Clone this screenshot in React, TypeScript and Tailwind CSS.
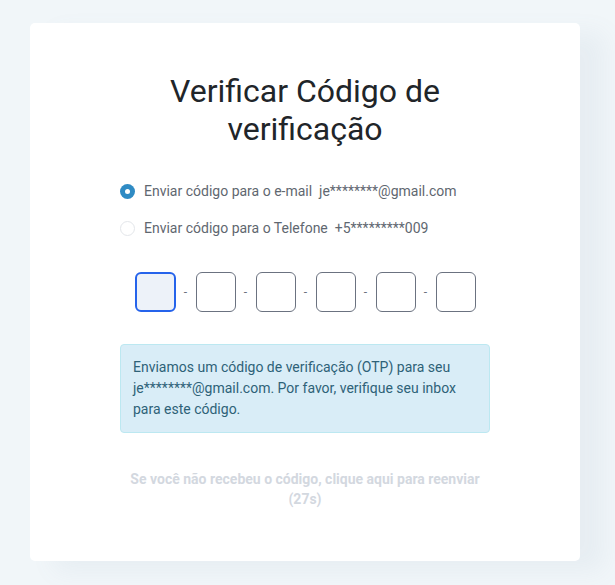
import { useState } from "react";

const DIGITS = [0, 1, 2, 3, 4, 5];

export default function App() {
  const [channel, setChannel] = useState<"email" | "phone">("email");

  return (
    <div className="min-h-[585px] w-[615px] bg-[#f1f6f9] pt-[23px] pl-[30px] font-['Roboto',sans-serif]">
      <div className="h-[538px] w-[550px] rounded-[5px] bg-white pt-[49px] shadow-[24px_10px_24px_rgba(120,140,160,0.08)]">
        <h1 className="mx-auto w-[320px] text-center text-[32px] leading-[38px] font-normal text-[#212529]">
          Verificar Código de verificação
        </h1>

        <div className="mx-auto mt-[33px] flex w-[370px] flex-col gap-[17px]">
          <label
            className="flex h-[20px] cursor-pointer items-center gap-[9px] text-[14px] text-[#5f6770]"
            onClick={() => setChannel("email")}
          >
            <Radio checked={channel === "email"} />
            <span>
              Enviar código para o e-mail&nbsp;&nbsp;je********@gmail.com
            </span>
          </label>
          <label
            className="flex h-[20px] cursor-pointer items-center gap-[9px] text-[14px] text-[#5f6770]"
            onClick={() => setChannel("phone")}
          >
            <Radio checked={channel === "phone"} />
            <span>Enviar código para o Telefone&nbsp;&nbsp;+5*********009</span>
          </label>
        </div>

        <div className="mt-[34px] flex items-center justify-center">
          {DIGITS.map((i) => (
            <div key={i} className="flex items-center">
              {i > 0 ? (
                <span className="w-[20px] text-center text-[12px] leading-none text-[#6b7280]">
                  -
                </span>
              ) : null}
              <input
                maxLength={1}
                className={
                  i === 0
                    ? "h-[40px] w-[41px] rounded-[6px] border-2 border-[#2563eb] bg-[#edf2f9] text-center text-[18px] outline-none"
                    : "h-[40px] w-[40px] rounded-[6px] border border-[#6b7280] bg-white text-center text-[18px] outline-none"
                }
              />
            </div>
          ))}
        </div>

        <div className="mx-auto mt-[32px] w-[370px] rounded-[4px] border border-[#bce8f1] bg-[#d9edf7] px-[12px] py-[12px] text-[14px] leading-[21px] text-[#2e6278]">
          Enviamos um código de verificação (OTP) para seu je********@gmail.com.
          Por favor, verifique seu inbox para este código.
        </div>

        <p className="mx-auto mt-[36px] w-[370px] text-center text-[14px] leading-[20px] font-bold text-[#d3d8df]">
          Se você não recebeu o código, clique aqui para reenviar (27s)
        </p>
      </div>
    </div>
  );
}

function Radio({ checked }: { checked: boolean }) {
  return checked ? (
    <span className="flex h-[15px] w-[15px] shrink-0 items-center justify-center rounded-full bg-[#2f8bc4]">
      <span className="h-[5px] w-[5px] rounded-full bg-white" />
    </span>
  ) : (
    <span className="h-[15px] w-[15px] shrink-0 rounded-full border border-[#e3e6ea] bg-white" />
  );
}
